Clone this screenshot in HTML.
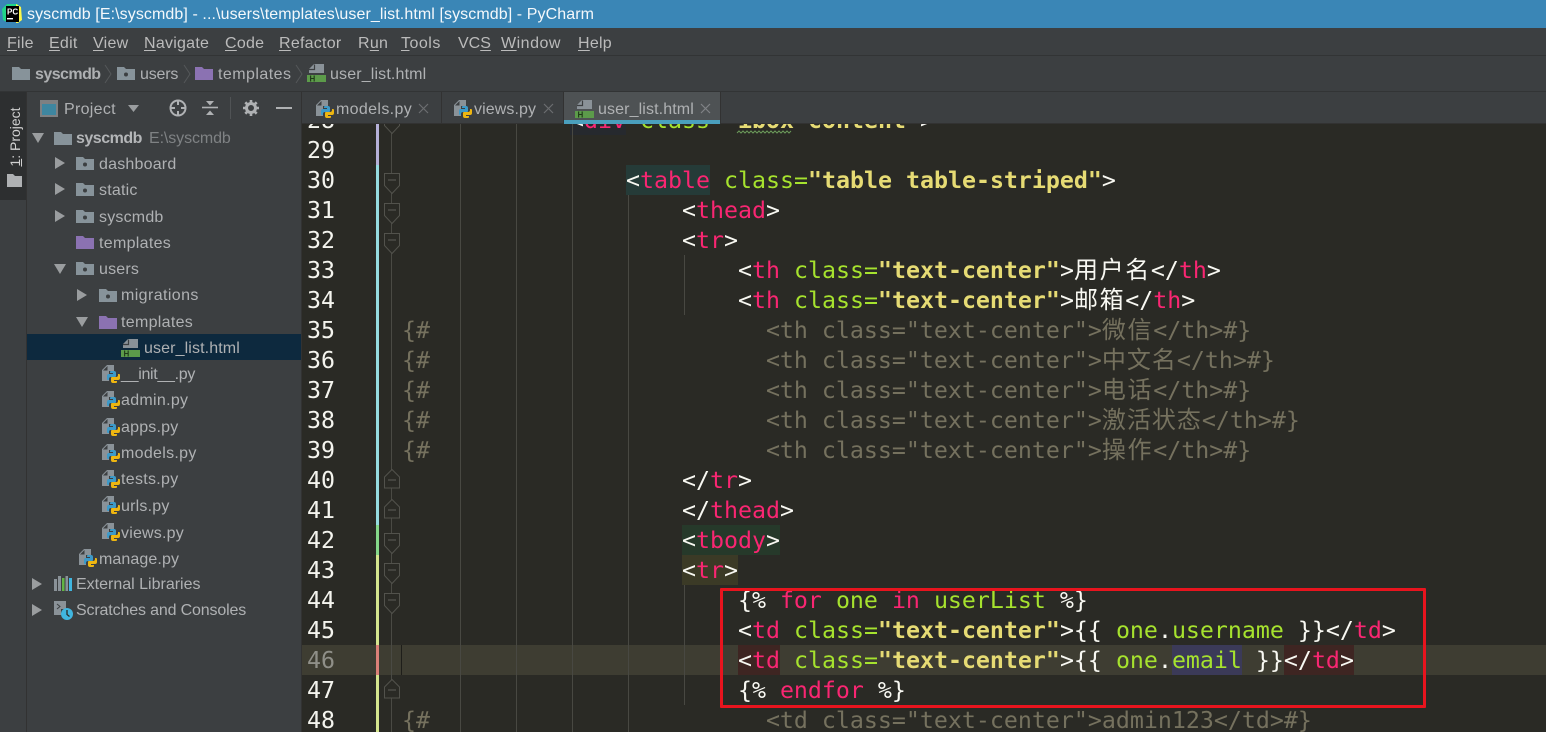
<!DOCTYPE html>
<html><head><meta charset="utf-8"><title>PyCharm</title>
<style>
html,body{margin:0;padding:0;background:#3c3f41}
#r{position:relative;width:1546px;height:732px;overflow:hidden;background:#3c3f41;font-family:"Liberation Sans","Noto Sans CJK SC",sans-serif;color:#bbb}
.a{position:absolute;white-space:pre}
.b{position:absolute}
.m{font-size:16px;top:34px;line-height:20px;color:#bbbbbb;letter-spacing:.25px}
.m u{text-underline-offset:2px}
.t{position:absolute;font-size:16px;line-height:20px;white-space:pre;color:#afb1b3;margin-top:1px;letter-spacing:.2px}
svg.i{position:absolute;overflow:visible}
#ed{position:absolute;left:302px;top:124px;width:1244px;height:608px;background:#2a2a25;overflow:hidden}
.l{position:absolute;left:100px;height:30px;line-height:30px;margin-top:1px;font-family:"DejaVu Sans Mono","Noto Sans CJK SC",monospace;font-size:23.25px;white-space:pre;color:#f8f8f2}
.n{position:absolute;left:5px;width:28px;text-align:right;height:30px;line-height:30px;margin-top:1px;font-family:"DejaVu Sans Mono",monospace;font-size:23.25px;color:#f4f4ee}
.k{color:#f92672}.c{color:#a6e22e}.s{color:#e6db74;font-weight:bold}.g{color:#75715e}
.z{display:inline-block;width:25.67px;text-align:left;font-size:24px;font-family:"Noto Sans CJK SC",sans-serif;line-height:16px}
.y{width:25px}
.h{position:absolute;height:30px}
.v{position:absolute;width:1px;background:#484842}
</style></head><body><div id="r">

<svg width="0" height="0" style="position:absolute"><defs>
<symbol id="fo" viewBox="0 0 18 16"><path d="M0 2h7l2 2h9v11H0z" fill="#87939a"/><circle cx="9" cy="9.500" r="2" fill="#3c3f41"/></symbol>
<symbol id="fp" viewBox="0 0 18 16"><path d="M0 2h7l2 2h9v11H0z" fill="#8b72b2"/></symbol>
<symbol id="py" viewBox="0 0 18 18"><path d="M0 5l5-5h7v6H7v10H0z" fill="#8a9298"/><path d="M5.500 1v4.500H1z" fill="#3c3f41"/><path d="M9 6h3a2 2 0 0 1 2 2v3a1 1 0 0 1-1 1H9a2 2 0 0 0-2 2v1H6a1 1 0 0 1-1-1v-3a2 2 0 0 1 2-2h4V8H8V7a1 1 0 0 1 1-1z" fill="#3c9ac9"/><path transform="rotate(180 11.500 12)" d="M9 6h3a2 2 0 0 1 2 2v3a1 1 0 0 1-1 1H9a2 2 0 0 0-2 2v1H6a1 1 0 0 1-1-1v-3a2 2 0 0 1 2-2h4V8H8V7a1 1 0 0 1 1-1z" fill="#eeb611"/></symbol>
<symbol id="ht" viewBox="0 0 19 18"><path d="M2 9V5l5-5h10v9z" fill="#8a9298"/><path d="M7.500 .5v5H2" fill="none" stroke="#3c3f41" stroke-width="1.200"/><rect x="0" y="11" width="19" height="7" fill="#5c9b4a"/><text x="2.500" y="17.500" font-family="Liberation Sans" font-size="8" font-weight="bold" fill="#1f3a18">H</text></symbol>
<symbol id="fd" viewBox="0 0 16 28"><path d="M.5 .5h15v12l-7.500 8-7.500-8z" fill="#2a2a25" stroke="#52524c"/><path d="M4 7h8" stroke="#5f5f59"/></symbol>
<symbol id="fu" viewBox="0 0 16 24"><path d="M8 .5l7.500 7.500v11H.5V8z" fill="#2a2a25" stroke="#52524c"/><path d="M4 11h8" stroke="#5f5f59"/></symbol>
<symbol id="tr" viewBox="0 0 10 12"><path d="M0 0l10 6-10 6z" fill="#9a9d9f"/></symbol>
<symbol id="td" viewBox="0 0 12 10"><path d="M0 0h12L6 10z" fill="#9a9d9f"/></symbol>
</defs></svg>

<!-- title bar -->
<div class="b" style="left:0;top:0;width:1546px;height:28px;background:#3a86b6"></div>
<svg class="i" style="left:0;top:0" width="26" height="26"><path d="M2 9l5-5h11v3H7v15l-4-2z" fill="#21d789"/><path d="M16 4l5 3 1 13-4 3h-2z" fill="#fcf84a"/><rect x="6" y="6" width="13" height="16" fill="#000"/><text x="7" y="14.500" font-family="Liberation Sans" font-size="8" font-weight="bold" fill="#fff">PC</text><rect x="7" y="18" width="6" height="1.400" fill="#fff"/></svg>
<div class="a" style="left:27px;top:5px;font-size:16px;line-height:20px;color:#f4f8fb;letter-spacing:.09px">syscmdb [E:\syscmdb] - ...\users\templates\user_list.html [syscmdb] - PyCharm</div>

<!-- menu -->
<div class="b" style="left:0;top:55px;width:1546px;height:1px;background:#323435"></div>
<div class="a m" style="left:7px"><u>F</u>ile</div>
<div class="a m" style="left:49px"><u>E</u>dit</div>
<div class="a m" style="left:93px"><u>V</u>iew</div>
<div class="a m" style="left:144px"><u>N</u>avigate</div>
<div class="a m" style="left:225px"><u>C</u>ode</div>
<div class="a m" style="left:279px"><u>R</u>efactor</div>
<div class="a m" style="left:358px">R<u>u</u>n</div>
<div class="a m" style="left:401px;letter-spacing:.5px"><u>T</u>ools</div>
<div class="a m" style="left:458px;letter-spacing:0">VC<u>S</u></div>
<div class="a m" style="left:501px;letter-spacing:.5px"><u>W</u>indow</div>
<div class="a m" style="left:578px"><u>H</u>elp</div>

<!-- breadcrumb -->
<svg class="i" style="left:12px;top:65px" width="18" height="16"><use href="#fo" width="18" height="16"/><rect x="5" y="5" width="8" height="8" fill="#87939a"/></svg>
<div class="t" style="left:35px;top:64px;font-weight:bold;color:#aeb0b2;letter-spacing:-.55px">syscmdb</div>
<svg class="i" style="left:104px;top:64px" width="9" height="20"><path d="M1 1l6 9-6 9" fill="none" stroke="#55585a"/></svg>
<svg class="i" style="left:117px;top:65px" width="18" height="16"><use href="#fo" width="18" height="16"/></svg>
<div class="t" style="left:140px;top:64px;letter-spacing:-.2px">users</div>
<svg class="i" style="left:183px;top:64px" width="9" height="20"><path d="M1 1l6 9-6 9" fill="none" stroke="#55585a"/></svg>
<svg class="i" style="left:195px;top:65px" width="18" height="16"><use href="#fp" width="18" height="16"/></svg>
<div class="t" style="left:218px;top:64px;letter-spacing:.45px">templates</div>
<svg class="i" style="left:295px;top:64px" width="9" height="20"><path d="M1 1l6 9-6 9" fill="none" stroke="#55585a"/></svg>
<svg class="i" style="left:307px;top:64px" width="19" height="19"><use href="#ht" width="19" height="18"/></svg>
<div class="t" style="left:330px;top:64px;letter-spacing:.15px">user_list.html</div>
<div class="b" style="left:0;top:91px;width:1546px;height:1px;background:#323435"></div>

<!-- left stripe -->
<div class="b" style="left:0;top:92px;width:26px;height:640px;background:#3c3f41;border-right:1px solid #323232"></div>
<div class="b" style="left:0;top:92px;width:26px;height:108px;background:#2d2f30"></div>
<div class="a" style="left:15px;top:137px;font-size:14px;line-height:16px;color:#d0d0d0;transform:translate(-50%,-50%) rotate(-90deg)"><u>1</u>: Project</div>
<svg class="i" style="left:7px;top:174px" width="15" height="13"><path d="M0 0h6l2 2h7v11H0z" fill="#afb1b3"/></svg>

<!-- project toolbar -->
<svg class="i" style="left:40px;top:100px" width="18" height="17"><rect x="0" y="0" width="18" height="17" fill="#7e8082"/><rect x="2" y="4" width="14" height="11" fill="#3e86a0"/></svg>
<div class="t" style="left:64px;top:99px;letter-spacing:.3px">Project</div>
<svg class="i" style="left:128px;top:105px" width="11" height="7"><path d="M0 0h11L5.500 7z" fill="#9a9d9f"/></svg>
<svg class="i" style="left:169px;top:99px" width="18" height="18" fill="none" stroke="#afb1b3" stroke-width="2"><circle cx="9" cy="9" r="7.500"/><path d="M9 1v5M9 12v5M1 9h5M12 9h5"/></svg>
<svg class="i" style="left:202px;top:100px" width="16" height="16"><path d="M0 7.500h16" stroke="#afb1b3" stroke-width="1.600"/><path d="M4 1h8L8 5.500zM4 15h8L8 10.500z" fill="#afb1b3"/></svg>
<div class="b" style="left:230px;top:97px;width:1px;height:22px;background:#505355"></div>
<svg class="i" style="left:243px;top:100px" width="16" height="16" viewBox="0 0 16 16"><circle cx="8" cy="8" r="4.500" fill="none" stroke="#afb1b3" stroke-width="3"/><path d="M8 0v3M8 13v3M0 8h3M13 8h3M2.300 2.300l2 2M11.700 11.700l2 2M2.300 13.700l2-2M11.700 4.300l2-2" stroke="#afb1b3" stroke-width="2.600"/></svg>
<div class="b" style="left:276px;top:107px;width:16px;height:2px;background:#afb1b3"></div>

<!-- tree -->
<div class="b" style="left:27px;top:334px;width:274px;height:26px;background:#0d293e"></div>
<div class="b" style="left:301px;top:92px;width:1px;height:640px;background:#323232"></div>

<svg class="i" style="left:32px;top:133px" width="12" height="10"><use href="#td" width="12" height="10"/></svg>
<svg class="i" style="left:54px;top:130px" width="18" height="16"><use href="#fo" width="18" height="16"/><rect x="5" y="5" width="8" height="8" fill="#87939a"/></svg>
<div class="t" style="left:76px;top:128px;font-weight:bold;color:#b4b6b8;letter-spacing:-.5px">syscmdb</div>
<div class="t" style="left:149px;top:128px;color:#7f8284;letter-spacing:-.1px">E:\syscmdb</div>

<svg class="i" style="left:55px;top:157px" width="10" height="12"><use href="#tr" width="10" height="12"/></svg>
<svg class="i" style="left:76px;top:155px" width="18" height="16"><use href="#fo" width="18" height="16"/></svg>
<div class="t" style="left:99px;top:154px">dashboard</div>

<svg class="i" style="left:55px;top:183px" width="10" height="12"><use href="#tr" width="10" height="12"/></svg>
<svg class="i" style="left:76px;top:181px" width="18" height="16"><use href="#fo" width="18" height="16"/></svg>
<div class="t" style="left:99px;top:180px">static</div>

<svg class="i" style="left:55px;top:210px" width="10" height="12"><use href="#tr" width="10" height="12"/></svg>
<svg class="i" style="left:76px;top:208px" width="18" height="16"><use href="#fo" width="18" height="16"/></svg>
<div class="t" style="left:99px;top:207px">syscmdb</div>

<svg class="i" style="left:76px;top:234px" width="18" height="16"><use href="#fp" width="18" height="16"/></svg>
<div class="t" style="left:99px;top:233px;letter-spacing:.3px">templates</div>

<svg class="i" style="left:54px;top:264px" width="12" height="10"><use href="#td" width="12" height="10"/></svg>
<svg class="i" style="left:76px;top:260px" width="18" height="16"><use href="#fo" width="18" height="16"/></svg>
<div class="t" style="left:99px;top:259px">users</div>

<svg class="i" style="left:77px;top:289px" width="10" height="12"><use href="#tr" width="10" height="12"/></svg>
<svg class="i" style="left:99px;top:287px" width="18" height="16"><use href="#fo" width="18" height="16"/></svg>
<div class="t" style="left:121px;top:285px;letter-spacing:.4px">migrations</div>

<svg class="i" style="left:76px;top:317px" width="12" height="10"><use href="#td" width="12" height="10"/></svg>
<svg class="i" style="left:99px;top:314px" width="18" height="16"><use href="#fp" width="18" height="16"/></svg>
<div class="t" style="left:121px;top:312px;letter-spacing:.3px">templates</div>

<svg class="i" style="left:121px;top:339px" width="19" height="18"><use href="#ht" width="19" height="18"/></svg>
<div class="t" style="left:144px;top:338px;letter-spacing:.12px">user_list.html</div>

<svg class="i" style="left:102px;top:365px" width="18" height="18"><use href="#py" width="18" height="18"/></svg>
<div class="t" style="left:121px;top:364px;letter-spacing:-.3px">__init__.py</div>
<svg class="i" style="left:102px;top:391px" width="18" height="18"><use href="#py" width="18" height="18"/></svg>
<div class="t" style="left:121px;top:390px;letter-spacing:.3px">admin.py</div>
<svg class="i" style="left:102px;top:418px" width="18" height="18"><use href="#py" width="18" height="18"/></svg>
<div class="t" style="left:121px;top:417px">apps.py</div>
<svg class="i" style="left:102px;top:444px" width="18" height="18"><use href="#py" width="18" height="18"/></svg>
<div class="t" style="left:121px;top:443px;letter-spacing:.3px">models.py</div>
<svg class="i" style="left:102px;top:470px" width="18" height="18"><use href="#py" width="18" height="18"/></svg>
<div class="t" style="left:121px;top:469px;letter-spacing:.3px">tests.py</div>
<svg class="i" style="left:102px;top:496px" width="18" height="18"><use href="#py" width="18" height="18"/></svg>
<div class="t" style="left:121px;top:496px">urls.py</div>
<svg class="i" style="left:102px;top:523px" width="18" height="18"><use href="#py" width="18" height="18"/></svg>
<div class="t" style="left:121px;top:523px">views.py</div>
<svg class="i" style="left:79px;top:549px" width="18" height="18"><use href="#py" width="18" height="18"/></svg>
<div class="t" style="left:99px;top:549px;letter-spacing:.1px">manage.py</div>

<svg class="i" style="left:32px;top:578px" width="10" height="12"><use href="#tr" width="10" height="12"/></svg>
<svg class="i" style="left:54px;top:576px" width="18" height="15"><rect x="0" y="3" width="3" height="12" fill="#8a9298"/><rect x="4" y="0" width="3" height="15" fill="#8a9298"/><rect x="8" y="2" width="2.500" height="13" fill="#62b543"/><rect x="11.500" y="0" width="2.500" height="15" fill="#8a9298"/><rect x="15" y="2" width="3" height="13" fill="#40b6e0"/></svg>
<div class="t" style="left:76px;top:574px;letter-spacing:0">External Libraries</div>

<svg class="i" style="left:32px;top:604px" width="10" height="12"><use href="#tr" width="10" height="12"/></svg>
<svg class="i" style="left:54px;top:601px" width="19" height="19"><path d="M0 0h12v8H7v6H0z" fill="#8a9298"/><path d="M3 3l3 2.500-3 2.500" stroke="#3c3f41" fill="none"/><circle cx="13" cy="13" r="6" fill="#40b6e0"/><path d="M13 9v4.500l2.500 2" stroke="#2a2a25" fill="none" stroke-width="1.300"/></svg>
<div class="t" style="left:76px;top:600px;letter-spacing:-.15px">Scratches and Consoles</div>

<!-- editor -->
<div id="ed">
 <div class="h" style="left:0;top:521px;width:1244px;background:#3e3d32"></div>
 <div class="h" style="left:268px;top:-19px;width:56px;background:#26292e"></div>
 <div class="h" style="left:324px;top:41px;width:84px;background:#253b38"></div>
 <div class="h" style="left:380px;top:401px;width:98px;background:#26392a"></div>
 <div class="h" style="left:380px;top:431px;width:56px;background:#3b3a26"></div>
 <div class="h" style="left:436px;top:521px;width:42px;background:#3e2522"></div>
 <div class="h" style="left:870px;top:521px;width:70px;background:#3b3a58"></div>
 <div class="h" style="left:982px;top:521px;width:70px;background:#3e2522"></div>

 <!-- change bars -->
 <div class="b" style="left:74px;top:0;width:3px;height:41px;background:#b5b0d8"></div>
 <div class="b" style="left:74px;top:41px;width:3px;height:360px;background:#95dbe0"></div>
 <div class="b" style="left:74px;top:401px;width:3px;height:30px;background:#85d88a"></div>
 <div class="b" style="left:74px;top:431px;width:3px;height:90px;background:#d5e58e"></div>
 <div class="b" style="left:74px;top:521px;width:3px;height:30px;background:#dc8078"></div>
 <div class="b" style="left:74px;top:551px;width:3px;height:57px;background:#d5e58e"></div>

 <!-- guides -->
 <div class="v" style="left:89px;top:0;height:608px;background:#4a4a44"></div>
 <div class="v" style="left:158px;top:0;height:608px"></div>
 <div class="v" style="left:214px;top:0;height:608px"></div>
 <div class="v" style="left:270px;top:0;height:608px"></div>
 <div class="v" style="left:326px;top:71px;height:537px"></div>
 <div class="v" style="left:382px;top:131px;height:60px"></div>
 <div class="v" style="left:382px;top:461px;height:120px"></div>
 <div class="b" style="left:99px;top:521px;width:1px;height:30px;background:#1e1e1a"></div>

 <!-- fold markers -->
 <svg class="i" style="left:82px;top:-11px" width="16" height="28"><use href="#fd" width="16" height="28"/></svg>
 <svg class="i" style="left:82px;top:49px" width="16" height="28"><use href="#fd" width="16" height="28"/></svg>
 <svg class="i" style="left:82px;top:79px" width="16" height="28"><use href="#fd" width="16" height="28"/></svg>
 <svg class="i" style="left:82px;top:109px" width="16" height="28"><use href="#fd" width="16" height="28"/></svg>
 <svg class="i" style="left:82px;top:345px" width="16" height="24"><use href="#fu" width="16" height="24"/></svg>
 <svg class="i" style="left:82px;top:375px" width="16" height="24"><use href="#fu" width="16" height="24"/></svg>
 <svg class="i" style="left:82px;top:409px" width="16" height="28"><use href="#fd" width="16" height="28"/></svg>
 <svg class="i" style="left:82px;top:439px" width="16" height="28"><use href="#fd" width="16" height="28"/></svg>
 <svg class="i" style="left:82px;top:469px" width="16" height="28"><use href="#fd" width="16" height="28"/></svg>
 <svg class="i" style="left:82px;top:555px" width="16" height="24"><use href="#fu" width="16" height="24"/></svg>

 <!-- numbers -->
 <div class="n" style="top:-19px">28</div>
 <div class="n" style="top:11px">29</div>
 <div class="n" style="top:41px">30</div>
 <div class="n" style="top:71px">31</div>
 <div class="n" style="top:101px">32</div>
 <div class="n" style="top:131px">33</div>
 <div class="n" style="top:161px">34</div>
 <div class="n" style="top:191px">35</div>
 <div class="n" style="top:221px">36</div>
 <div class="n" style="top:251px">37</div>
 <div class="n" style="top:281px">38</div>
 <div class="n" style="top:311px">39</div>
 <div class="n" style="top:341px">40</div>
 <div class="n" style="top:371px">41</div>
 <div class="n" style="top:401px">42</div>
 <div class="n" style="top:431px">43</div>
 <div class="n" style="top:461px">44</div>
 <div class="n" style="top:491px">45</div>
 <div class="n" style="top:521px;color:#8f8f88">46</div>
 <div class="n" style="top:551px">47</div>
 <div class="n" style="top:581px">48</div>

 <!-- code -->
 <div class="l" style="top:-19px">            &lt;<span class="k">div</span> <span class="c">class=</span><span class="s">"ibox-content"</span>&gt;</div>
 <div class="l" style="top:41px">                &lt;<span class="k">table</span> <span class="c">class=</span><span class="s">"table table-striped"</span>&gt;</div>
 <div class="l" style="top:71px">                    &lt;<span class="k">thead</span>&gt;</div>
 <div class="l" style="top:101px">                    &lt;<span class="k">tr</span>&gt;</div>
 <div class="l" style="top:131px">                        &lt;<span class="k">th</span> <span class="c">class=</span><span class="s">"text-center"</span>&gt;<span class="z">用</span><span class="z">户</span><span class="z">名</span>&lt;/<span class="k">th</span>&gt;</div>
 <div class="l" style="top:161px">                        &lt;<span class="k">th</span> <span class="c">class=</span><span class="s">"text-center"</span>&gt;<span class="z">邮</span><span class="z">箱</span>&lt;/<span class="k">th</span>&gt;</div>
 <div class="l g" style="top:191px">{#                        &lt;th class="text-center"&gt;<span class="z">微</span><span class="z">信</span>&lt;/th&gt;#}</div>
 <div class="l g" style="top:221px">{#                        &lt;th class="text-center"&gt;<span class="z y">中</span><span class="z y">文</span><span class="z y">名</span>&lt;/th&gt;#}</div>
 <div class="l g" style="top:251px">{#                        &lt;th class="text-center"&gt;<span class="z">电</span><span class="z">话</span>&lt;/th&gt;#}</div>
 <div class="l g" style="top:281px">{#                        &lt;th class="text-center"&gt;<span class="z y">激</span><span class="z y">活</span><span class="z y">状</span><span class="z y">态</span>&lt;/th&gt;#}</div>
 <div class="l g" style="top:311px">{#                        &lt;th class="text-center"&gt;<span class="z">操</span><span class="z">作</span>&lt;/th&gt;#}</div>
 <div class="l" style="top:341px">                    &lt;/<span class="k">tr</span>&gt;</div>
 <div class="l" style="top:371px">                    &lt;/<span class="k">thead</span>&gt;</div>
 <div class="l" style="top:401px">                    &lt;<span class="k">tbody</span>&gt;</div>
 <div class="l" style="top:431px">                    &lt;<span class="k">tr</span>&gt;</div>
 <div class="l" style="top:461px">                        {% <span class="k">for</span> <span class="c">one</span> <span class="k">in</span> <span class="c">userList</span> %}</div>
 <div class="l" style="top:491px">                        &lt;<span class="k">td</span> <span class="c">class=</span><span class="s">"text-center"</span>&gt;{{ <span class="c">one</span>.<span class="c">username</span> }}&lt;/<span class="k">td</span>&gt;</div>
 <div class="l" style="top:521px">                        &lt;<span class="k">td</span> <span class="c">class=</span><span class="s">"text-center"</span>&gt;{{ <span class="c">one</span>.<span class="c">email</span> }}&lt;/<span class="k">td</span>&gt;</div>
 <div class="l" style="top:551px">                        {% <span class="k">endfor</span> %}</div>
 <div class="l g" style="top:581px">{#                        &lt;td class="text-center"&gt;admin123&lt;/td&gt;#}</div>
</div>

<!-- tabs -->
<div class="b" style="left:302px;top:92px;width:1244px;height:32px;background:#3c3f41"></div>
<div class="b" style="left:302px;top:123px;width:1244px;height:1px;background:#323232"></div>
<div class="b" style="left:441px;top:92px;width:1px;height:31px;background:#323232"></div>
<div class="b" style="left:563px;top:92px;width:1px;height:31px;background:#323232"></div>
<div class="b" style="left:564px;top:92px;width:156px;height:28px;background:#4e5254"></div>
<div class="b" style="left:564px;top:120px;width:156px;height:4px;background:#4a9fbd"></div>
<div class="b" style="left:720px;top:92px;width:1px;height:32px;background:#323232"></div>
<svg class="i" style="left:316px;top:100px" width="18" height="18"><use href="#py" width="18" height="18"/></svg>
<div class="t" style="left:336px;top:99px;letter-spacing:.35px">models.py</div>
<svg class="i" style="left:419px;top:104px" width="9" height="9"><path d="M0 0l9 9M9 0l-9 9" stroke="#6b6e70" stroke-width="1.200"/></svg>
<svg class="i" style="left:454px;top:100px" width="18" height="18"><use href="#py" width="18" height="18"/></svg>
<div class="t" style="left:474px;top:99px;letter-spacing:.1px">views.py</div>
<svg class="i" style="left:544px;top:104px" width="9" height="9"><path d="M0 0l9 9M9 0l-9 9" stroke="#6b6e70" stroke-width="1.200"/></svg>
<svg class="i" style="left:575px;top:100px" width="19" height="18"><use href="#ht" width="19" height="18"/></svg>
<div class="t" style="left:598px;top:99px;letter-spacing:.12px">user_list.html</div>
<svg class="i" style="left:701px;top:104px" width="9" height="9"><path d="M0 0l9 9M9 0l-9 9" stroke="#808386" stroke-width="1.200"/></svg>

<!-- squiggle under ibox -->
<svg class="i" style="left:737px;top:130px" width="56" height="4"><path d="M0 3l2-2 2 2 2-2 2 2 2-2 2 2 2-2 2 2 2-2 2 2 2-2 2 2 2-2 2 2 2-2 2 2 2-2 2 2 2-2 2 2 2-2 2 2 2-2 2 2 2-2 2 2 2-2" fill="none" stroke="#6b9a5a"/></svg>

<!-- red annotation -->
<div class="b" style="left:720px;top:588px;width:700px;height:114px;border:3px solid #e8141e;border-radius:1px"></div>
</div></body></html>
